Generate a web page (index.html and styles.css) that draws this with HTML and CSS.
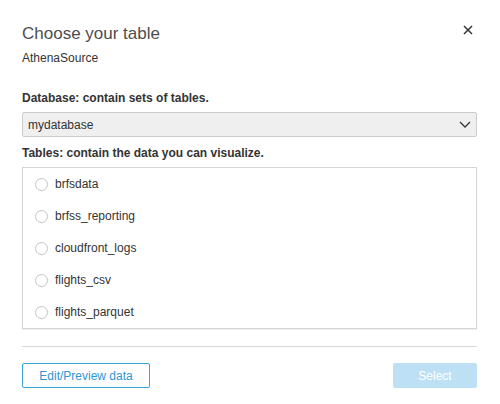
FILE: index.html
```html
<!DOCTYPE html>
<html>
<head>
<meta charset="utf-8">
<link rel="stylesheet" href="styles.css">
</head>
<body>
<div class="dialog">
  <div class="header">
    <h1 class="title">Choose your table</h1>
    <button class="close" aria-label="Close">
      <svg width="10" height="10" viewBox="0 0 10 10"><path d="M1 1L9 9M9 1L1 9" stroke="#333" stroke-width="1.5" fill="none"/></svg>
    </button>
  </div>
  <div class="source">AthenaSource</div>
  <div class="label label-db">Database: contain sets of tables.</div>
  <div class="select">
    <span>mydatabase</span>
    <svg width="12" height="7" viewBox="0 0 12 7"><path d="M1 1L6 6L11 1" stroke="#333" stroke-width="1.25" fill="none"/></svg>
  </div>
  <div class="label label-tables">Tables: contain the data you can visualize.</div>
  <div class="list">
    <label class="item"><span class="radio"></span>brfsdata</label>
    <label class="item"><span class="radio"></span>brfss_reporting</label>
    <label class="item"><span class="radio"></span>cloudfront_logs</label>
    <label class="item"><span class="radio"></span>flights_csv</label>
    <label class="item"><span class="radio"></span>flights_parquet</label>
  </div>
  <div class="divider"></div>
  <div class="footer">
    <button class="btn btn-outline">Edit/Preview data</button>
    <button class="btn btn-primary">Select</button>
  </div>
</div>
</body>
</html>
```

FILE: styles.css
```css
html, body {
  margin: 0;
  padding: 0;
  background: #fff;
}
body {
  font-family: "Liberation Sans", Arial, Helvetica, sans-serif;
  color: #333;
}
.dialog {
  width: 455px;
  padding: 24px 23px 0 22px;
}
.header {
  display: flex;
  justify-content: space-between;
  align-items: flex-start;
}
.title {
  margin: 0;
  font-size: 17px;
  line-height: 20px;
  font-weight: normal;
  color: #4d4d4d;
}
.close {
  border: 0;
  background: none;
  padding: 0;
  margin: 1px 4px 0 0;
  width: 10px;
  height: 10px;
  display: flex;
}
.source {
  margin-top: 6px;
  font-size: 12px;
  line-height: 16px;
  color: #333;
}
.label {
  font-size: 12px;
  line-height: 16px;
  font-weight: bold;
  color: #333;
}
.label-db {
  margin-top: 24px;
}
.select {
  margin-top: 6px;
  height: 23px;
  border: 1px solid #ccc;
  border-radius: 2px;
  background: #efefef;
  display: flex;
  align-items: center;
  justify-content: space-between;
  padding: 0 5px 0 5px;
  font-size: 12px;
  color: #333;
}
.label-tables {
  margin-top: 8px;
}
.list {
  margin-top: 6px;
  border: 1px solid #d6d6d6;
  box-shadow: 0 1px 1px rgba(0,0,0,0.06);
}
.item {
  display: flex;
  align-items: center;
  height: 32px;
  padding-left: 12px;
  font-size: 12px;
  color: #333;
}
.radio {
  width: 11px;
  height: 11px;
  border: 1px solid #c4c4c4;
  border-radius: 50%;
  margin-right: 7px;
  background: #fff;
}
.divider {
  margin-top: 17px;
  height: 1px;
  background: #d9d9d9;
}
.footer {
  margin-top: 16px;
  display: flex;
  justify-content: space-between;
}
.btn {
  height: 25px;
  font-family: "Liberation Sans", Arial, Helvetica, sans-serif;
  font-size: 12px;
  border-radius: 2px;
  padding: 0;
}
.btn-outline {
  width: 128px;
  background: #fff;
  border: 1px solid #3da2dc;
  color: #2e96d3;
}
.btn-primary {
  width: 84px;
  background: #bee0f4;
  border: 1px solid #bee0f4;
  color: #fff;
}
```
